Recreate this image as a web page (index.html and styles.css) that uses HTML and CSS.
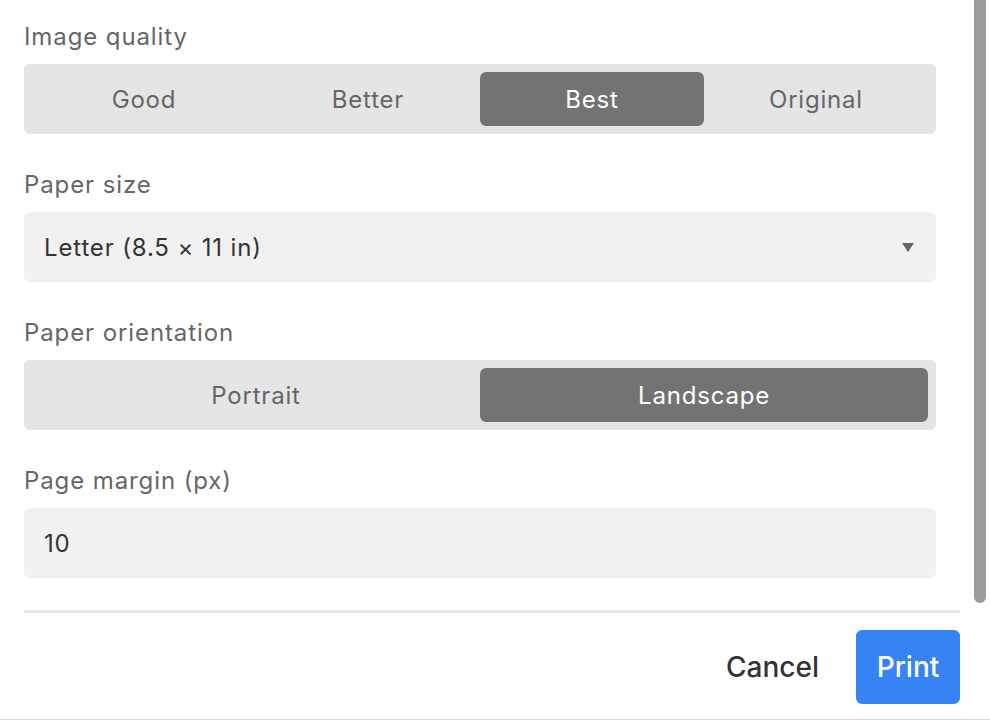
FILE: index.html
```html
<!DOCTYPE html>
<html>
<head>
<meta charset="utf-8">
<link rel="stylesheet" href="styles.css">
</head>
<body>
<div class="dialog">
  <div class="top">
    <div class="form">
      <div class="field">
        <div class="label">Image quality</div>
        <div class="seg seg4">
          <div class="opt">Good</div>
          <div class="opt">Better</div>
          <div class="opt active">Best</div>
          <div class="opt">Original</div>
        </div>
      </div>
      <div class="field">
        <div class="label">Paper size</div>
        <div class="select">
          <span>Letter (8.5 × 11 in)</span>
          <svg class="caret" width="12" height="9" viewBox="0 0 12 9"><path d="M0 0H12L6 9Z" fill="#666"/></svg>
        </div>
      </div>
      <div class="field">
        <div class="label">Paper orientation</div>
        <div class="seg seg2">
          <div class="opt">Portrait</div>
          <div class="opt active">Landscape</div>
        </div>
      </div>
      <div class="field">
        <div class="label">Page margin (px)</div>
        <div class="input">10</div>
      </div>
    </div>
    <div class="scrollbar"></div>
  </div>
  <div class="divider"></div>
  <div class="footer">
    <button class="btn cancel">Cancel</button>
    <button class="btn print">Print</button>
  </div>
</div>
</body>
</html>
```

FILE: styles.css
```css
html, body {
  margin: 0;
  padding: 0;
  background: #ffffff;
}
body {
  font-family: Inter, "Noto Sans", sans-serif;
  font-weight: 400;
  width: 990px;
  height: 720px;
  overflow: hidden;
}
.dialog {
  height: 719px;
  border-bottom: 1px solid #cfd8ea;
  display: flex;
  flex-direction: column;
}
.top {
  display: flex;
  align-items: flex-start;
}
.form {
  width: 912px;
  padding: 22px 24px 0 24px;
  display: flex;
  flex-direction: column;
  gap: 36px;
}
.label {
  height: 30px;
  line-height: 30px;
  font-size: 24px;
  letter-spacing: 0.9px;
  color: #666666;
  margin-bottom: 12px;
}
.seg {
  height: 70px;
  box-sizing: border-box;
  padding: 8px;
  background: #e5e5e5;
  border-radius: 6px;
  display: grid;
}
.seg4 { grid-template-columns: repeat(4, 1fr); }
.seg2 { grid-template-columns: repeat(2, 1fr); }
.opt {
  display: flex;
  align-items: center;
  justify-content: center;
  font-size: 24px;
  letter-spacing: 0.8px;
  color: #666666;
  border-radius: 6px;
}
.opt.active {
  background: #737373;
  color: #ffffff;
}
.select, .input {
  height: 70px;
  box-sizing: border-box;
  padding: 0 22px 0 20px;
  background: #f1f1f1;
  border-radius: 6px;
  display: flex;
  align-items: center;
  font-size: 24px;
  letter-spacing: 0.85px;
  color: #333333;
}
.select {
  justify-content: space-between;
}
.caret {
  display: block;
}
.scrollbar {
  width: 12px;
  height: 603px;
  margin-left: 14px;
  background: #9b9b9b;
  border-radius: 0 0 6px 6px;
}
.divider {
  margin: 7px 0 0 24px;
  width: 936px;
  height: 3px;
  background: #e5e5e5;
}
.footer {
  display: flex;
  justify-content: flex-end;
  align-items: center;
  padding-right: 30px;
  margin-top: 17px;
}
.btn {
  font-family: Inter, "Noto Sans", sans-serif;
  font-weight: 500;
  font-size: 28px;
  border: none;
  border-radius: 6px;
  height: 74px;
  cursor: pointer;
}
.cancel {
  background: transparent;
  color: #333333;
  padding: 0 37px 0 0;
}
.print {
  background: #3684f4;
  color: #ffffff;
  width: 104px;
  padding: 0;
}
```
